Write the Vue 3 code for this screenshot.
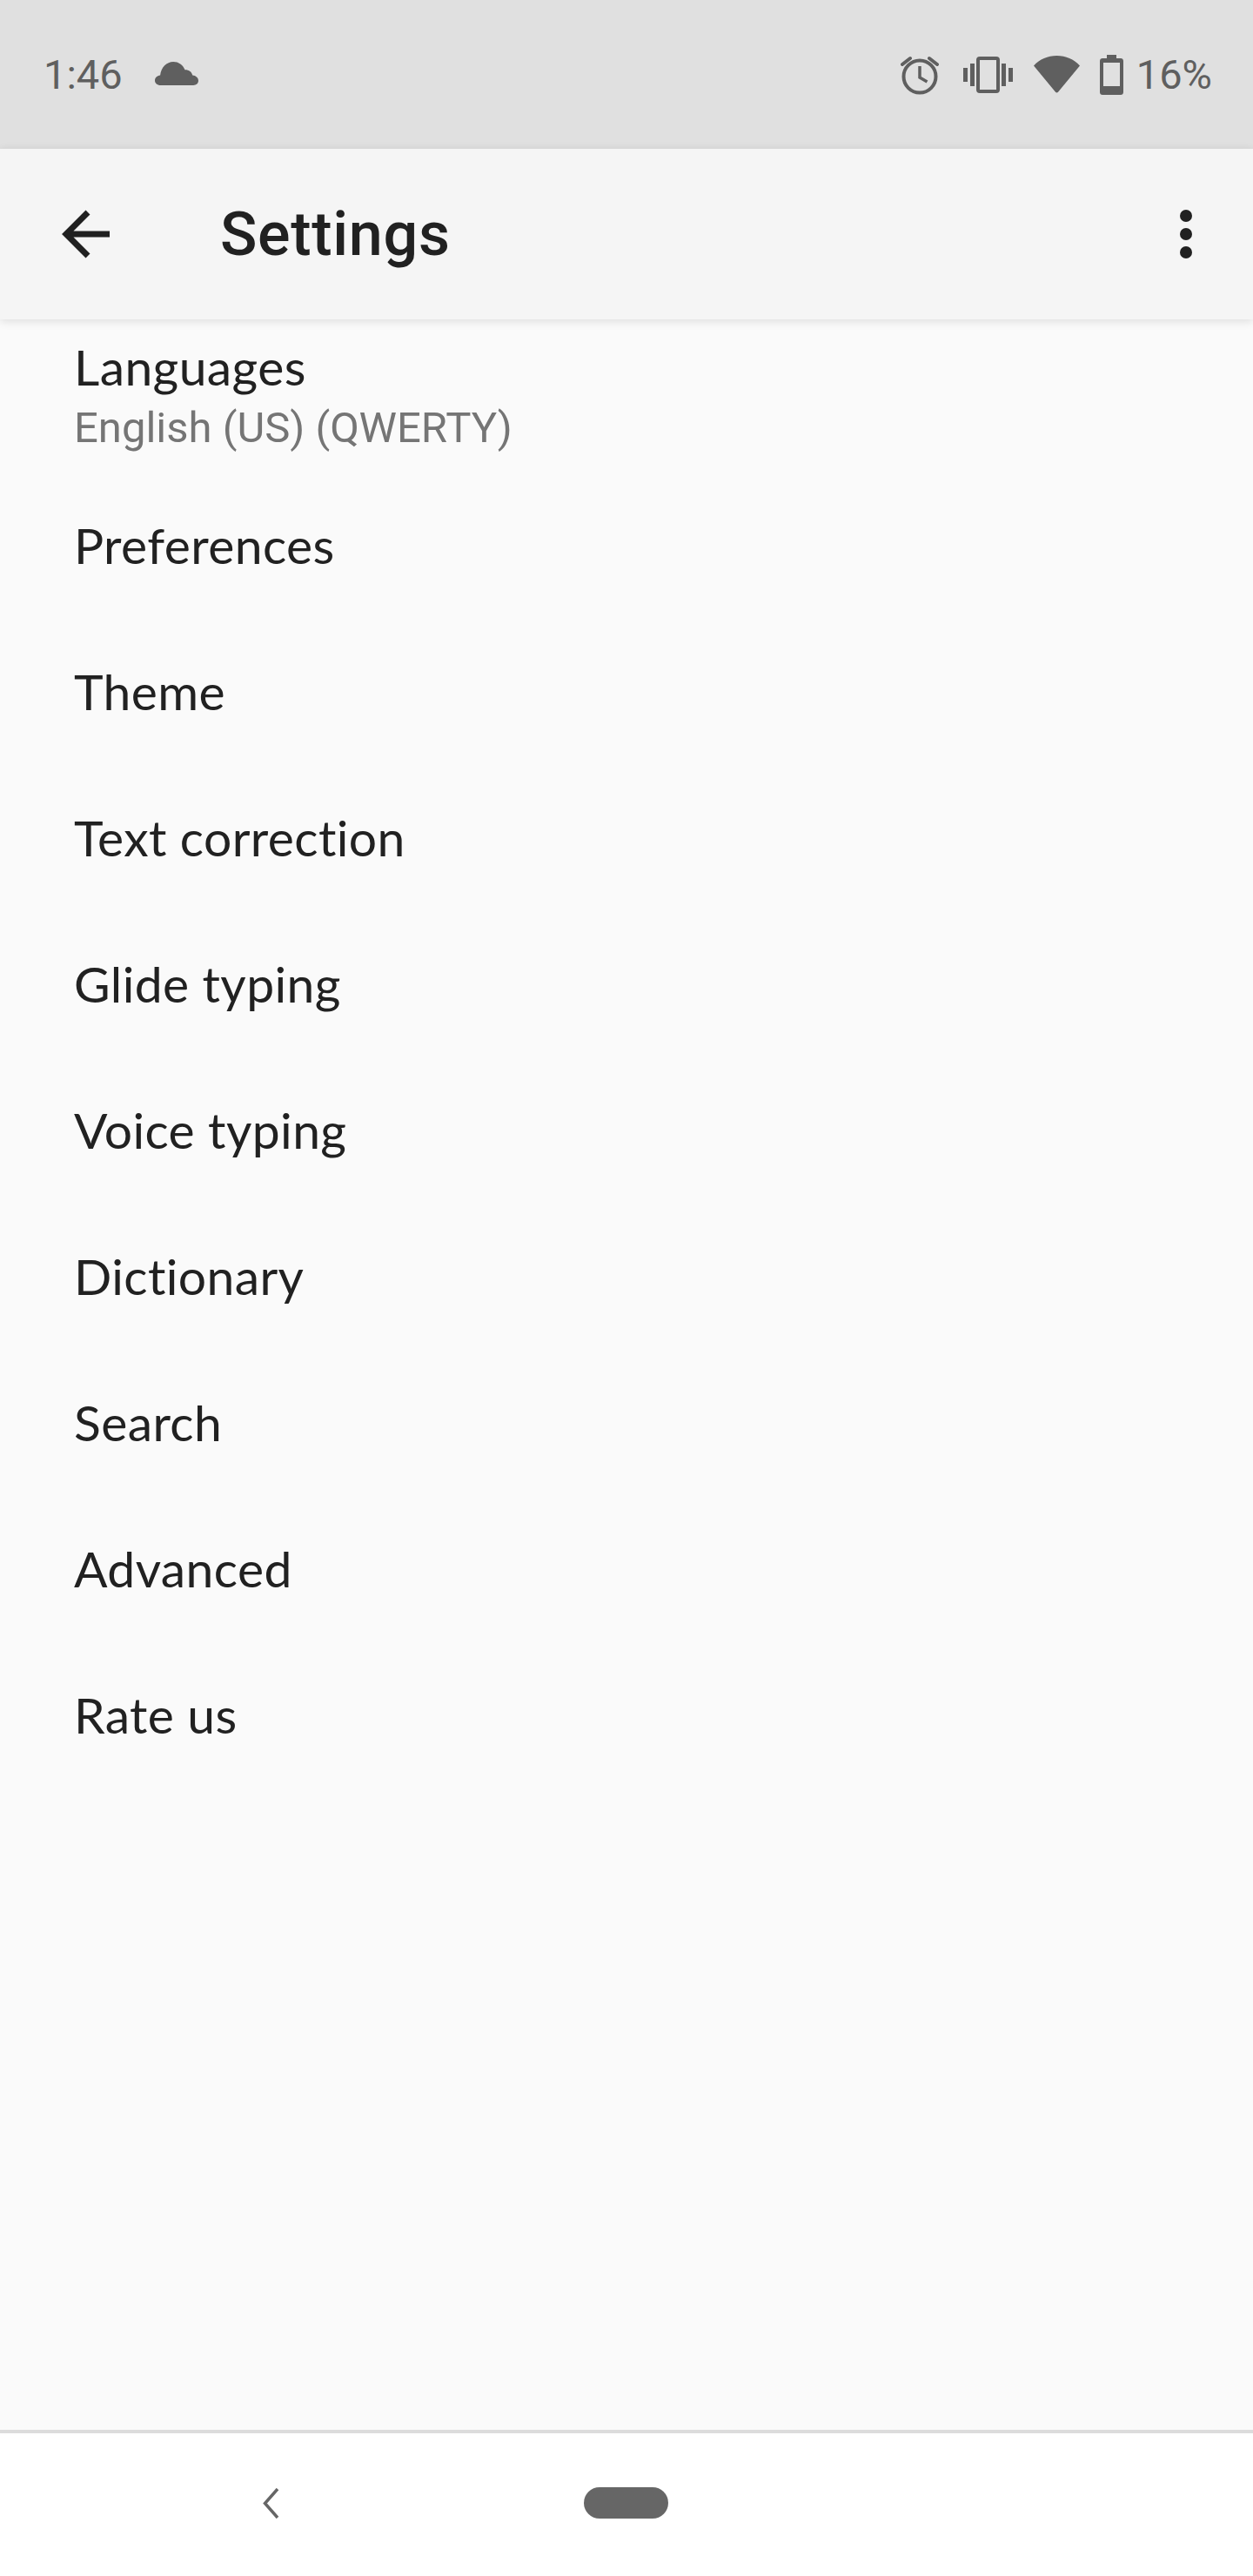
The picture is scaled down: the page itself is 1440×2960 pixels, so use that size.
<script setup>
const items = [
  'Preferences',
  'Theme',
  'Text correction',
  'Glide typing',
  'Voice typing',
  'Dictionary',
  'Search',
  'Advanced',
  'Rate us'
];
</script>

<template>
  <div class="phone">
    <div class="status-bar">
      <div class="status-left">
        <span class="status-text">1:46</span>
        <svg class="ic-cloud" viewBox="0 0 46 27" preserveAspectRatio="none">
          <path d="M6 27C2.500 27 0 24.600 0 21.500S2.400 16 5.600 15.600C6.600 6.400 12.400 0 19.500 0c5.600 0 10 3.400 12.300 9.300 4-.2 7.200 2.200 8 6.300 3.400.3 6.200 2.800 6.200 6.200 0 3-2.300 5.200-5.300 5.200z" fill="#5f5f5f"/>
        </svg>
      </div>
      <div class="status-right">
        <svg class="ic-alarm" viewBox="0 0 44 46">
          <circle cx="22" cy="25" r="18.500" fill="none" stroke="#5f5f5f" stroke-width="4"/>
          <path d="M22 13v13l8.500 5" fill="none" stroke="#5f5f5f" stroke-width="3.500"/>
          <path d="M2 11L11 4M42 11L33 4" fill="none" stroke="#5f5f5f" stroke-width="4" stroke-linecap="round"/>
        </svg>
        <svg class="ic-vibrate" viewBox="0 0 57 42">
          <rect x="17" y="2" width="23" height="38" rx="2" fill="none" stroke="#5f5f5f" stroke-width="4"/>
          <path d="M0 13h5v16H0zM8 8h5v26H8zM44 8h5v26h-5zM52 13h5v16h-5z" fill="#5f5f5f"/>
        </svg>
        <svg class="ic-wifi" viewBox="0 0 53 43">
          <path d="M0 11.500C7 4 16 0 26.500 0S46 4 53 11.500L28 41.800c-.8 1-2.200 1-3 0z" fill="#5f5f5f"/>
        </svg>
        <svg class="ic-battery" viewBox="0 0 27 46">
          <path fill-rule="evenodd" d="M8 0h11v4h5c1.700 0 3 1.300 3 3v36c0 1.700-1.300 3-3 3H3c-1.700 0-3-1.300-3-3V7c0-1.700 1.300-3 3-3h5zM4 9v27h19V9z" fill="#5f5f5f"/>
        </svg>
        <span class="status-text battery-pct">16%</span>
      </div>
    </div>

    <header class="toolbar">
      <svg class="ic-back" viewBox="0 0 56 56">
        <path d="M56 28H6M31 3L6 28l25 25" fill="none" stroke="#212121" stroke-width="7"/>
      </svg>
      <h1 class="title">Settings</h1>
      <div class="menu">
        <span class="dot"></span>
        <span class="dot"></span>
        <span class="dot"></span>
      </div>
    </header>

    <main class="list">
      <div class="row row-two">
        <div class="row-title">Languages</div>
        <div class="row-sub">English (US) (QWERTY)</div>
      </div>
      <div class="row" v-for="item in items" :key="item">
        <div class="row-title">{{ item }}</div>
      </div>
    </main>

    <footer class="nav-bar">
      <svg class="ic-nav-back" viewBox="0 0 19 35">
        <path d="M17 1L2.500 17.500 17 34" fill="none" stroke="#666" stroke-width="3.500"/>
      </svg>
      <span class="pill"></span>
    </footer>
  </div>
</template>

<style scoped>
.phone {
  width: 1440px;
  height: 2960px;
  display: flex;
  flex-direction: column;
  background: #fafafa;
  font-family: Roboto, "Liberation Sans", sans-serif;
  overflow: hidden;
}

.status-bar {
  height: 171px;
  flex: none;
  background: #e0e0e0;
  display: flex;
  align-items: center;
  justify-content: space-between;
  padding: 0 47px 0 50px;
}

.status-left,
.status-right {
  display: flex;
  align-items: center;
}

.status-text {
  font-size: 47px;
  line-height: 56px;
  color: #5f5f5f;
}

.ic-cloud {
  width: 50px;
  height: 27px;
  margin-left: 37px;
  margin-top: -3px;
}

.ic-alarm {
  width: 44px;
  height: 46px;
  margin-right: 28px;
}

.ic-vibrate {
  width: 57px;
  height: 42px;
  margin-right: 24px;
}

.ic-wifi {
  width: 53px;
  height: 43px;
  margin-right: 23px;
}

.ic-battery {
  width: 27px;
  height: 46px;
  margin-right: 15px;
}

.toolbar {
  height: 196px;
  flex: none;
  background: #f5f5f5;
  display: flex;
  align-items: center;
  padding: 0 70px;
  box-shadow: 0 2px 10px rgba(0, 0, 0, 0.12);
  position: relative;
}

.ic-back {
  width: 56px;
  height: 56px;
  flex: none;
}

.title {
  margin: 0 0 0 127px;
  flex: 1;
  font-size: 70px;
  font-weight: 500;
  line-height: 84px;
  letter-spacing: 0.7px;
  color: #212121;
}

.menu {
  display: flex;
  flex-direction: column;
  gap: 7px;
}

.dot {
  width: 14px;
  height: 14px;
  border-radius: 50%;
  background: #212121;
}

.list {
  flex: 1;
}

.row {
  height: 168px;
  padding: 0 0 3px 85px;
  box-sizing: border-box;
  display: flex;
  flex-direction: column;
  justify-content: center;
}

.row-two {
  height: 176px;
  justify-content: flex-start;
  padding: 13px 0 0 85px;
}

.row-two .row-title {
  line-height: 83px;
}

.row-title {
  font-size: 57px;
  line-height: 66px;
  color: #212121;
  font-family: Lato, Roboto, sans-serif;
  letter-spacing: 0.4px;
}

.row-sub {
  font-size: 49px;
  line-height: 58px;
  color: #757575;
}

.nav-bar {
  height: 168px;
  flex: none;
  box-sizing: border-box;
  background: #fff;
  border-top: 4px solid #dcdcdc;
  display: flex;
  align-items: center;
  padding: 0 0 4px 302px;
}

.ic-nav-back {
  width: 19px;
  height: 35px;
  flex: none;
}

.pill {
  width: 97px;
  height: 36px;
  margin-left: 350px;
  background: #666;
  border-radius: 18px;
}
</style>

<style>
body {
  margin: 0;
}
</style>
